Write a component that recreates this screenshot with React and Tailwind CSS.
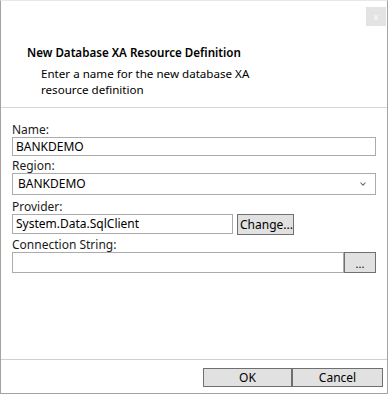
import React from "react";

const font = { fontFamily: '"Segoe UI", "Noto Sans", sans-serif' };

function Field({ label, children, className = "" }) {
  return (
    <div className={className}>
      <div className="text-[12px] leading-[15px] text-[#1b1b1b]">{label}</div>
      {children}
    </div>
  );
}

export default function App() {
  return (
    <div className="w-[389px] h-[396px] bg-white" style={font}>
      <div className="w-[388px] h-[394px] border border-[#a3a3a3] border-t-[#e8e8e8] flex flex-col text-black">
        {/* header */}
        <div className="h-[107px] border-b border-[#d6d6d6] shrink-0">
          <div className="flex justify-end pt-[6px] pr-[1px]">
            <div className="w-[20px] h-[19px] bg-[#e3e3e3] flex items-center justify-center">
              <span className="text-[9px] leading-none text-[#f4f4f4] font-bold">x</span>
            </div>
          </div>
          <div className="pl-[26px] mt-[19px] text-[11.6px] leading-[16px] font-semibold">
            New Database XA Resource Definition
          </div>
          <div className="pl-[40px] mt-[5px] w-[285px] text-[11.6px] leading-[16px]">
            Enter a name for the new database XA resource definition
          </div>
        </div>

        {/* form */}
        <div className="px-[11px] pt-[14px]">
          <Field label="Name:">
            <div className="h-[19px] w-[364px] border border-[#ababab] px-[3px] text-[12px] leading-[17px]">
              BANKDEMO
            </div>
          </Field>
          <Field label="Region:" className="mt-[2px]">
            <div className="h-[22px] w-[364px] border border-[#ababab] pl-[5px] pr-[6px] flex items-center justify-between text-[12px]">
              <span>BANKDEMO</span>
              <svg width="6" height="4" viewBox="0 0 6 4" className="mr-[3px]">
                <path d="M0.5 0.5 L3 3.2 L5.5 0.5" fill="none" stroke="#6b6b6b" strokeWidth="1.1" />
              </svg>
            </div>
          </Field>
          <Field label="Provider:" className="mt-[4px]">
            <div className="flex items-start gap-[4px]">
              <div className="h-[20px] w-[221px] border border-[#ababab] px-[3px] text-[12px] leading-[18px]">
                System.Data.SqlClient
              </div>
              <div className="h-[21px] w-[57px] bg-[#e1e1e1] border border-[#707070] text-[12px] leading-[19px] pl-[2px]">
                Change...
              </div>
            </div>
          </Field>
          <Field label="Connection String:" className="mt-[2px]">
            <div className="flex">
              <div className="h-[21px] w-[332px] border border-[#ababab]" />
              <div className="h-[21px] w-[32px] bg-[#e1e1e1] border border-[#707070] text-[11px] leading-[22px] text-center">
                ...
              </div>
            </div>
          </Field>
        </div>

        {/* footer */}
        <div className="mt-auto border-t border-[#cfcfcf] pt-[8px] pb-[6px] pr-[4px] flex justify-end">
          <div className="h-[19px] w-[89px] bg-[#e1e1e1] border border-[#6f6f6f] text-[12px] leading-[17px] text-center">
            OK
          </div>
          <div className="h-[19px] w-[91px] bg-[#e1e1e1] border border-[#6f6f6f] text-[12px] leading-[17px] text-center">
            Cancel
          </div>
        </div>
      </div>
    </div>
  );
}
